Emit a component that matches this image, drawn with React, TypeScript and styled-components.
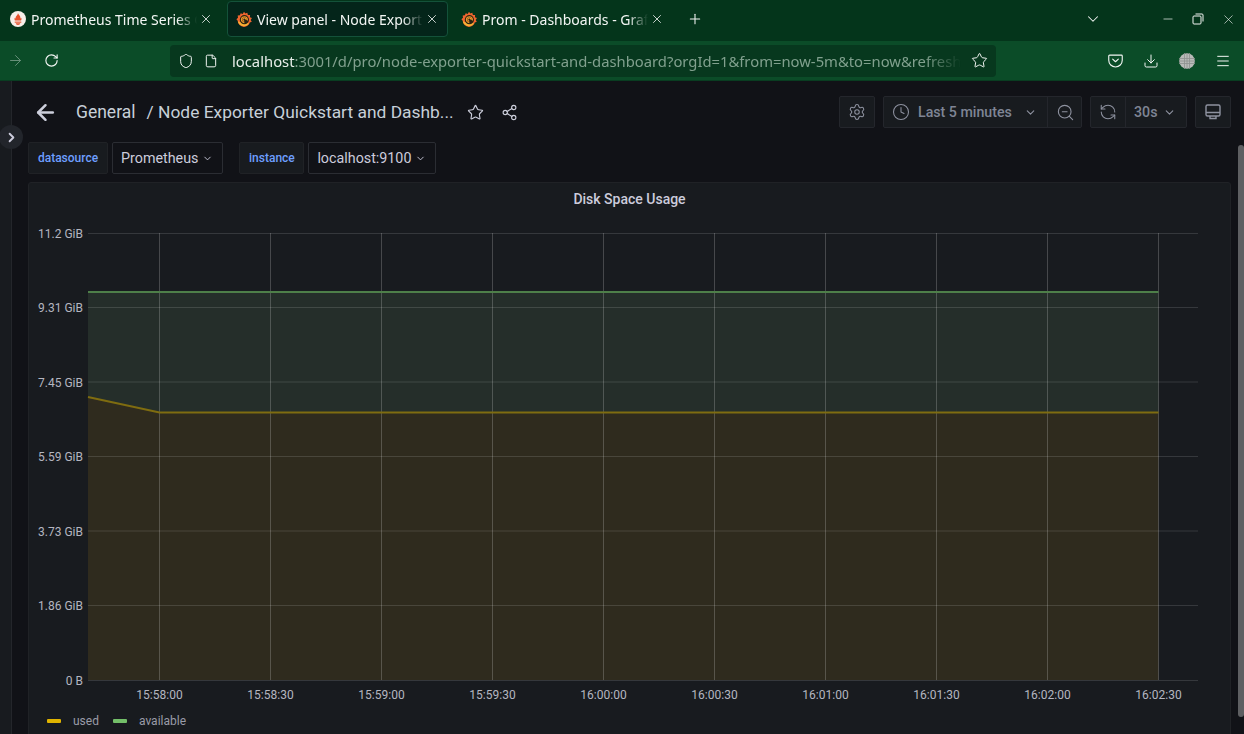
import React from "react";
import styled, { createGlobalStyle } from "styled-components";
import {
  ArrowLeft,
  ArrowRight,
  ChevronDown,
  ChevronRight,
  Clock,
  Download,
  File,
  Menu,
  Minus,
  Plus,
  RefreshCcw,
  RotateCw,
  Settings,
  Share2,
  Shield,
  Star,
  X,
  ZoomOut,
} from "lucide-react";

const yTicks = [
  { y: 233.5, label: "11.2 GiB" },
  { y: 307.5, label: "9.31 GiB" },
  { y: 382, label: "7.45 GiB" },
  { y: 456.5, label: "5.59 GiB" },
  { y: 531, label: "3.73 GiB" },
  { y: 605.5, label: "1.86 GiB" },
  { y: 680.5, label: "0 B" },
];

const xTicks = [
  { x: 159.5, label: "15:58:00" },
  { x: 270.5, label: "15:58:30" },
  { x: 381.5, label: "15:59:00" },
  { x: 492.5, label: "15:59:30" },
  { x: 603.5, label: "16:00:00" },
  { x: 714.5, label: "16:00:30" },
  { x: 825.5, label: "16:01:00" },
  { x: 936.5, label: "16:01:30" },
  { x: 1047.5, label: "16:02:00" },
  { x: 1158.5, label: "16:02:30" },
];

const GrafanaLogo = () => (
  <svg width="16" height="16" viewBox="0 0 16 16">
    <path
      d="M8 .8l1.3 1.800 2-.8.6 2.100 2.200.1-.2 2.200 2 .9-1.200 1.800 1.100 1.800-2 .9c-.6 2.500-3 4.300-5.800 4.300A6.200 6.200 0 0 1 1.700 9.700L.4 8.200 2 6.800l-.3-2.200 2.200-.3.8-2 2 .7z"
      fill="#f0652f"
    />
    <path d="M1.800 9.500a6.200 6.200 0 0 0 6 5.700c2.200 0 4-1 5-2.800l-2-1.400H3z" fill="#f9b233" />
    <circle cx="8.400" cy="8.700" r="4.600" fill="#2a2412" />
    <path
      d="M11.300 9.500a3 3 0 1 0-2.900 2.200M10 8.900a1.600 1.600 0 1 0-1.700 1.300"
      fill="none"
      stroke="#f59a2b"
      strokeWidth="1.100"
    />
  </svg>
);

const PrometheusLogo = () => (
  <svg width="16" height="16" viewBox="0 0 16 16">
    <circle cx="8" cy="8" r="8" fill="#f7efe9" />
    <path
      d="M8 2.300c.4 1.500 2.500 2.400 2.500 5 0 .5.600-.2.700-.6.500 1 .4 2-.1 2.700H4.900c-.5-.7-.6-1.700-.1-2.700.1.400.7 1.100.7.600C5.500 5 7.600 4.500 8 2.300z"
      fill="#e6522c"
    />
    <rect x="4.700" y="10.600" width="6.600" height="1.100" fill="#e6522c" />
    <path d="M5.800 12.200h4.400c0 1-1 1.700-2.200 1.700s-2.200-.7-2.200-1.700z" fill="#e6522c" />
  </svg>
);

const PocketIcon = () => (
  <svg width="15" height="15" viewBox="0 0 16 16" fill="none" stroke="#f3f6f4" strokeWidth="1.200">
    <path d="M1.700 2.200h12.600c.5 0 .9.400.9.900v4.600a7.200 7.200 0 0 1-14.400 0V3.100c0-.5.400-.9.900-.9z" />
    <path d="M5 6.500L8 9.300l3-2.800" strokeLinecap="round" strokeLinejoin="round" />
  </svg>
);

const GlobeIcon = () => (
  <svg width="16" height="16" viewBox="0 0 16 16">
    <circle cx="8" cy="8" r="7.800" fill="#b9bbb9" />
    <path
      d="M0 5.500h16M0 8h16M0 10.500h16M5.500 0v16M8 0v16M10.500 0v16"
      stroke="#8d918e"
      strokeWidth="0.800"
    />
  </svg>
);

const RestoreIcon = () => (
  <svg width="12" height="12" viewBox="0 0 12 12" fill="none" stroke="#f3f6f4" strokeWidth="1">
    <rect x="1" y="3" width="8" height="8" rx="1" />
    <path d="M3.500 1h6.500a1 1 0 0 1 1 1v6.500" />
  </svg>
);

const TvIcon = () => (
  <svg width="18" height="18" viewBox="0 0 18 18" fill="none" stroke="#8e92a0" strokeWidth="1.400">
    <rect x="2" y="2" width="14" height="11" rx="1.500" />
    <path d="M2 9.500h14M6 13v2.500h6V13" />
  </svg>
);

const Chart = () => (
  <ChartSvg viewBox="28 182 1203 525" width="1203" height="525">
    <polygon
      points="88,292 1158.500,292 1158.500,412.500 159.500,412.500 88,397"
      fill="#252e2a"
    />
    <polygon
      points="88,397 159.500,412.500 1158.500,412.500 1158.500,680 88,680"
      fill="#2f2b1e"
    />
    {yTicks.map((t) => (
      <line key={t.label} x1="88" x2="1198" y1={t.y} y2={t.y} stroke="#ffffff" strokeOpacity="0.13" />
    ))}
    {xTicks.map((t) => (
      <line key={t.label} x1={t.x} x2={t.x} y1="233" y2="680" stroke="#ffffff" strokeOpacity="0.2" />
    ))}
    <line x1="88" x2="1158.500" y1="292" y2="292" stroke="#4e7f49" strokeWidth="2" />
    <polyline
      points="88,397 159.500,412.500 1158.500,412.500"
      fill="none"
      stroke="#7f6c10"
      strokeWidth="2"
    />
    {yTicks.map((t) => (
      <AxisText key={t.label} x="83" y={t.y + 3.500} textAnchor="end">
        {t.label}
      </AxisText>
    ))}
    {xTicks.map((t) => (
      <AxisText key={t.label} x={t.x} y="698" textAnchor="middle">
        {t.label}
      </AxisText>
    ))}
  </ChartSvg>
);

const App: React.FC = () => {
  return (
    <Window>
      <GlobalStyle />
      <TabBar>
        <Tab>
          <PrometheusLogo />
          <TabLabel>Prometheus Time Series Collection</TabLabel>
          <X size={14} strokeWidth={1.4} />
        </Tab>
        <Tab $active>
          <GrafanaLogo />
          <TabLabel>View panel - Node Exporter Quickstart</TabLabel>
          <X size={14} strokeWidth={1.4} />
        </Tab>
        <Tab>
          <GrafanaLogo />
          <TabLabel>Prom - Dashboards - Grafana</TabLabel>
          <X size={14} strokeWidth={1.4} />
        </Tab>
        <NewTab>
          <Plus size={16} strokeWidth={1.6} />
        </NewTab>
        <TabSpacer />
        <TabListToggle>
          <ChevronDown size={18} strokeWidth={1.4} />
        </TabListToggle>
        <WindowControls>
          <Minus size={14} strokeWidth={1.2} />
          <RestoreIcon />
          <X size={15} strokeWidth={1} />
        </WindowControls>
      </TabBar>

      <NavBar>
        <NavButton $dim>
          <ArrowRight size={17} strokeWidth={1.4} />
        </NavButton>
        <NavButton>
          <RotateCw size={15} strokeWidth={1.8} />
        </NavButton>
        <UrlBar>
          <Shield size={16} strokeWidth={1.5} />
          <File size={14} strokeWidth={1.7} />
          <UrlText>
            localhost<span>:3001/d/pro/node-exporter-quickstart-and-dashboard?orgId=1&amp;from=now-5m&amp;to=now&amp;refresh=30s&amp;viewPanel=23</span>
          </UrlText>
          <Star size={17} strokeWidth={1.4} />
        </UrlBar>
        <NavActions>
          <PocketIcon />
          <Download size={16} strokeWidth={1.5} />
          <GlobeIcon />
          <Menu size={16} strokeWidth={1.5} />
        </NavActions>
      </NavBar>

      <Page>
        <SideStrip />
        <Content>
          <Header>
            <BackButton>
              <ArrowLeft size={25} strokeWidth={2.4} />
            </BackButton>
            <Title>
              General<TitleSep>/ Node Exporter Quickstart and Dashb...</TitleSep>
            </Title>
            <HeaderIcon>
              <Star size={17} strokeWidth={1.6} />
            </HeaderIcon>
            <HeaderIcon>
              <Share2 size={17} strokeWidth={1.6} />
            </HeaderIcon>
            <HeaderSpacer />
            <ToolButton>
              <Settings size={18} strokeWidth={1.4} />
            </ToolButton>
            <ToolGroup>
              <ToolSegment $width={163}>
                <Clock size={18} strokeWidth={1.4} />
                <ToolText>Last 5 minutes</ToolText>
                <ChevronDown size={13} strokeWidth={2} />
              </ToolSegment>
              <ToolSegment $width={34}>
                <ZoomOut size={19} strokeWidth={1.4} />
              </ToolSegment>
            </ToolGroup>
            <ToolGroup>
              <ToolSegment $width={34}>
                <RefreshCcw size={18} strokeWidth={1.4} />
              </ToolSegment>
              <ToolSegment $width={61}>
                <ToolText>30s</ToolText>
                <ChevronDown size={13} strokeWidth={2} />
              </ToolSegment>
            </ToolGroup>
            <ToolButton>
              <TvIcon />
            </ToolButton>
          </Header>

          <Variables>
            <VarGroup>
              <VarLabel $width={80}>datasource</VarLabel>
              <VarSelect>
                Prometheus
                <ChevronDown size={11} strokeWidth={2} />
              </VarSelect>
            </VarGroup>
            <VarGroup>
              <VarLabel $width={65}>instance</VarLabel>
              <VarSelect>
                localhost:9100
                <ChevronDown size={11} strokeWidth={2} />
              </VarSelect>
            </VarGroup>
          </Variables>

          <Panel>
            <PanelTitle>Disk Space Usage</PanelTitle>
            <Chart />
            <Legend>
              <LegendItem>
                <Swatch $color="#e0b400" />
                used
              </LegendItem>
              <LegendItem>
                <Swatch $color="#73bf69" />
                available
              </LegendItem>
            </Legend>
          </Panel>
        </Content>
        <ToggleButton>
          <ChevronRight size={15} strokeWidth={3} />
        </ToggleButton>
        <ScrollThumb />
      </Page>
    </Window>
  );
};

export default App;

const GlobalStyle = createGlobalStyle`
  html, body {
    margin: 0;
    padding: 0;
    overflow: hidden;
    background: #111217;
  }
  * {
    box-sizing: border-box;
  }
`;

const Window = styled.div`
  width: 1244px;
  height: 734px;
  overflow: hidden;
  display: flex;
  flex-direction: column;
  font-family: Roboto, "Liberation Sans", sans-serif;
`;

const TabBar = styled.div`
  height: 41px;
  flex: none;
  display: flex;
  align-items: flex-start;
  padding: 1px 0 0 1px;
  background: #04351b;
  color: #f3f6f4;
`;

const Tab = styled.div<{ $active?: boolean }>`
  width: 221px;
  height: 36px;
  flex: none;
  margin-right: ${(p) => (p.$active ? "4px" : "5px")};
  padding: 0 8px;
  display: flex;
  align-items: center;
  gap: 5px;
  border-radius: 4px;
  border: 1px solid ${(p) => (p.$active ? "#14523a" : "transparent")};
  background: ${(p) => (p.$active ? "#04251a" : "transparent")};
  font-family: "Noto Sans", "Open Sans", sans-serif;
  font-size: 14px;
`;

const TabLabel = styled.span`
  flex: 1;
  min-width: 0;
  margin-right: -3px;
  white-space: nowrap;
  overflow: hidden;
  -webkit-mask-image: linear-gradient(to right, #000 88%, transparent 100%);
  mask-image: linear-gradient(to right, #000 88%, transparent 100%);
`;

const NewTab = styled.div`
  width: 34px;
  height: 36px;
  display: flex;
  align-items: center;
  justify-content: center;
`;

const TabSpacer = styled.div`
  flex: 1;
`;

const TabListToggle = styled.div`
  width: 34px;
  height: 36px;
  display: flex;
  align-items: center;
  justify-content: center;
  margin-right: 51px;
`;

const WindowControls = styled.div`
  width: 83px;
  height: 36px;
  padding-right: 8px;
  display: flex;
  align-items: center;
  justify-content: space-between;
`;

const NavBar = styled.div`
  height: 40px;
  flex: none;
  display: flex;
  align-items: center;
  background: #0b4c28;
  border-bottom: 1px solid #093d21;
  color: #f3f6f4;
`;

const NavButton = styled.div<{ $dim?: boolean }>`
  width: 36px;
  flex: none;
  margin-left: ${(p) => (p.$dim ? "-3px" : "0")};
  display: flex;
  justify-content: center;
  opacity: ${(p) => (p.$dim ? 0.4 : 1)};
`;

const UrlBar = styled.div`
  width: 826px;
  height: 32px;
  margin-left: 101px;
  padding: 0 8px;
  display: flex;
  align-items: center;
  gap: 10px;
  border-radius: 4px;
  background: #07381e;
`;

const UrlText = styled.div`
  flex: 1;
  min-width: 0;
  margin-left: 4px;
  padding-right: 4px;
  white-space: nowrap;
  overflow: hidden;
  font-family: "Noto Sans", "Open Sans", sans-serif;
  font-size: 14.800px;
  color: #e8eeea;
  -webkit-mask-image: linear-gradient(to right, #000 95%, transparent 100%);
  mask-image: linear-gradient(to right, #000 95%, transparent 100%);

  span {
    color: #81a08e;
  }
`;

const NavActions = styled.div`
  flex: 1;
  padding: 0 13px 0 112px;
  display: flex;
  align-items: center;
  justify-content: space-between;
`;

const Page = styled.div`
  flex: 1;
  min-height: 0;
  position: relative;
  display: flex;
  background: #111217;
`;

const SideStrip = styled.div`
  width: 12px;
  flex: none;
  background: #181b1f;
  border-right: 1px solid #24262b;
`;

const Content = styled.div`
  flex: 1;
  min-width: 0;
  padding: 15px 13px 0 16px;
  display: flex;
  flex-direction: column;
`;

const Header = styled.div`
  height: 32px;
  flex: none;
  display: flex;
  align-items: center;
`;

const BackButton = styled.div`
  width: 43px;
  margin-left: 5px;
  flex: none;
  display: flex;
  color: #cdcfdc;
`;

const Title = styled.div`
  margin-right: 5px;
  font-size: 17.500px;
  color: #c7d0d9;
  white-space: nowrap;
`;

const TitleSep = styled.span`
  margin-left: 11px;
  font-size: 17.400px;
`;

const HeaderIcon = styled.div`
  width: 34px;
  flex: none;
  display: flex;
  justify-content: center;
  color: #cdcfdc;
`;

const HeaderSpacer = styled.div`
  flex: 1;
`;

const ToolButton = styled.div`
  width: 36px;
  height: 32px;
  flex: none;
  margin-right: 8px;
  display: flex;
  align-items: center;
  justify-content: center;
  background: #181b1f;
  border: 1px solid #24262c;
  border-radius: 2px;
  color: #8e92a0;

  &:last-child {
    margin-right: 0;
  }
`;

const ToolGroup = styled.div`
  height: 32px;
  flex: none;
  margin-right: 8px;
  display: flex;
  background: #181b1f;
  border: 1px solid #24262c;
  border-radius: 2px;
  color: #8e92a0;
`;

const ToolSegment = styled.div<{ $width: number }>`
  width: ${(p) => p.$width}px;
  padding: 0 0 0 8px;
  display: flex;
  align-items: center;
  justify-content: space-between;

  & + & {
    border-left: 1px solid #24262c;
  }

  & > svg:last-child:not(:first-child) {
    margin-right: 10px;
  }
`;

const ToolText = styled.span`
  flex: 1;
  font-size: 14.200px;
  font-weight: 500;
  color: #7f8595;

  svg + & {
    margin-left: 8px;
  }
`;

const Variables = styled.div`
  height: 32px;
  flex: none;
  margin-top: 14px;
  display: flex;
  gap: 16px;
`;

const VarGroup = styled.div`
  display: flex;
  gap: 4px;
`;

const VarLabel = styled.div<{ $width: number }>`
  width: ${(p) => p.$width}px;
  display: flex;
  align-items: center;
  justify-content: center;
  background: #181b1f;
  border: 1px solid #202226;
  border-radius: 2px;
  font-size: 12px;
  font-weight: 500;
  color: #6e9fff;
`;

const VarSelect = styled.div`
  padding: 0 9px 0 8px;
  display: flex;
  align-items: center;
  gap: 4px;
  background: #111217;
  border: 1px solid #2b2d33;
  border-radius: 2px;
  font-size: 14.300px;
  color: #ccccdc;
`;

const Panel = styled.div`
  height: 560px;
  flex: none;
  margin-top: 8px;
  background: #181b1f;
  border: 1px solid #202226;
  border-radius: 3px;
  overflow: hidden;
`;

const PanelTitle = styled.div`
  height: 32px;
  display: flex;
  align-items: center;
  justify-content: center;
  font-size: 14px;
  font-weight: 500;
  color: #ccccdc;
`;

const ChartSvg = styled.svg`
  display: block;
  margin: -33px 0 0 -1px;
`;

const AxisText = styled.text`
  font-family: Roboto, "Liberation Sans", sans-serif;
  font-size: 12px;
  fill: #b4b6c0;
  transform: translateY(1px);
`;

const Legend = styled.div`
  display: flex;
  gap: 14px;
  margin-top: 7px;
  padding-left: 18px;
  font-size: 12px;
  color: #9a9ca8;
`;

const LegendItem = styled.div`
  display: flex;
  align-items: center;
  gap: 12px;
`;

const Swatch = styled.span<{ $color: string }>`
  width: 14px;
  height: 4px;
  border-radius: 1px;
  background: ${(p) => p.$color};
`;

const ToggleButton = styled.div`
  position: absolute;
  left: -1px;
  top: 44px;
  width: 24px;
  height: 24px;
  display: flex;
  align-items: center;
  justify-content: center;
  border-radius: 50%;
  background: #22252b;
  color: #ccccdc;
`;

const ScrollThumb = styled.div`
  position: absolute;
  right: 0;
  top: 64px;
  width: 6px;
  height: 572px;
  border-radius: 3px;
  background: #5e5f62;
`;
